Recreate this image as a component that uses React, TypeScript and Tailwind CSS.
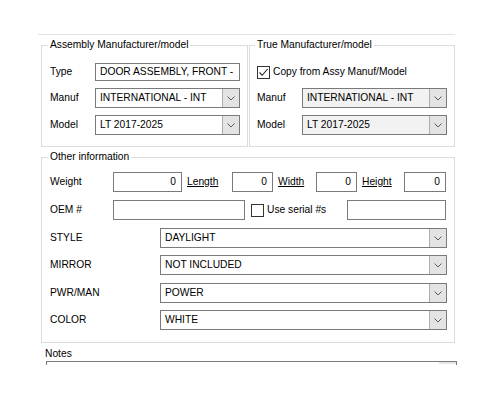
import React from "react"

function Chevron() {
  return (
    <svg width="8" height="5" viewBox="0 0 8 5" fill="none">
      <path d="M0.5 0.5 L4 4 L7.5 0.5" stroke="#5a5a5a" strokeWidth="1" />
    </svg>
  )
}

function Combo({ value, width, grey }: { value: string; width: string; grey?: boolean }) {
  return (
    <div className={`flex h-[20px] border border-[#7a7a7a] ${width} ${grey ? "bg-[#f2f2f2]" : "bg-white"}`}>
      <div className="flex-1 flex items-center pl-[4px] overflow-hidden whitespace-nowrap">{value}</div>
      <div className="w-[17px] flex items-center justify-center bg-[#e3e3e3] border-l border-[#adadad]">
        <Chevron />
      </div>
    </div>
  )
}

function Input({ value, width, right }: { value?: string; width: string; right?: boolean }) {
  return (
    <div
      className={`flex items-center h-[20px] border border-[#7a7a7a] bg-white ${width} ${
        right ? "justify-end pr-[5px]" : "pl-[4px]"
      }`}
    >
      {value}
    </div>
  )
}

function Checkbox({ checked }: { checked?: boolean }) {
  return (
    <div className="w-[13px] h-[13px] border border-[#333] bg-white flex items-center justify-center shrink-0">
      {checked && (
        <svg width="11" height="11" viewBox="0 0 11 11" fill="none">
          <path d="M1.5 5.5 L4.2 8.3 L9.6 2" stroke="#222" strokeWidth="1.1" />
        </svg>
      )}
    </div>
  )
}

const attrs = [
  { label: "STYLE", value: "DAYLIGHT", mt: "mt-[8px]" },
  { label: "MIRROR", value: "NOT INCLUDED", mt: "mt-[7px]" },
  { label: "PWR/MAN", value: "POWER", mt: "mt-[8px]" },
  { label: "COLOR", value: "WHITE", mt: "mt-[7px]" },
]

export default function App() {
  return (
    <div
      className="w-[500px] h-[400px] bg-white overflow-hidden pt-[34px] pl-[38px] text-[10.25px] leading-[12px] text-black"
      style={{ fontFamily: '"Liberation Sans", Arial, sans-serif' }}
    >
      {/* outer frame line */}
      <div className="w-[417px] border-t border-[#e3e3e3]" />

      {/* Manufacturer groups */}
      <div className="flex mt-[4px] ml-[3px]">
        <fieldset className="w-[207px] border border-[#dcdcdc] p-0 m-0">
          <legend className="ml-[6px] px-[2px] leading-[12px]">Assembly Manufacturer/model</legend>
          <div className="pt-[12px] pb-[11px] pl-[8px]">
            <div className="flex items-center h-[18px]">
              <span className="w-[45px]">Type</span>
              <div className="flex items-center h-[18px] w-[145px] border border-[#7a7a7a] pl-[4px] whitespace-nowrap overflow-hidden">
                DOOR ASSEMBLY, FRONT -
              </div>
            </div>
            <div className="flex items-center mt-[7px]">
              <span className="w-[45px]">Manuf</span>
              <Combo value="INTERNATIONAL - INT" width="w-[145px]" />
            </div>
            <div className="flex items-center mt-[7px]">
              <span className="w-[45px]">Model</span>
              <Combo value="LT 2017-2025" width="w-[145px]" />
            </div>
          </div>
        </fieldset>

        <fieldset className="w-[206px] ml-[1px] border border-[#dcdcdc] p-0 m-0">
          <legend className="ml-[5px] px-[2px] leading-[12px]">True Manufacturer/model</legend>
          <div className="pt-[12px] pb-[11px] pl-[7px]">
            <div className="flex items-center h-[18px] gap-[3px]">
              <Checkbox checked />
              <span>Copy from Assy Manuf/Model</span>
            </div>
            <div className="flex items-center mt-[7px]">
              <span className="w-[45px]">Manuf</span>
              <Combo value="INTERNATIONAL - INT" width="w-[145px]" grey />
            </div>
            <div className="flex items-center mt-[7px]">
              <span className="w-[45px]">Model</span>
              <Combo value="LT 2017-2025" width="w-[145px]" grey />
            </div>
          </div>
        </fieldset>
      </div>

      {/* Other information */}
      <fieldset className="w-[414px] mt-[4px] ml-[3px] border border-[#dcdcdc] p-0">
        <legend className="ml-[6px] px-[2px] leading-[12px]">Other information</legend>
        <div className="pt-[9px] pb-[12px] pl-[8px]">
          <div className="flex items-center">
            <span className="w-[63px]">Weight</span>
            <Input value="0" width="w-[69px]" right />
            <span className="w-[45px] ml-[5px] underline">Length</span>
            <Input value="0" width="w-[41px]" right />
            <span className="w-[38px] ml-[5px] underline">Width</span>
            <Input value="0" width="w-[41px]" right />
            <span className="w-[42px] ml-[5px] underline">Height</span>
            <Input value="0" width="w-[42px]" right />
          </div>
          <div className="flex items-center mt-[8px]">
            <span className="w-[63px]">OEM #</span>
            <Input width="w-[132px]" />
            <div className="ml-[6px]">
              <Checkbox />
            </div>
            <span className="w-[80px] ml-[3px]">Use serial #s</span>
            <Input width="w-[99px]" />
          </div>
          {attrs.map((a) => (
            <div key={a.label} className={`flex items-center ${a.mt}`}>
              <span className="w-[110px]">{a.label}</span>
              <Combo value={a.value} width="w-[287px]" />
            </div>
          ))}
        </div>
      </fieldset>

      {/* Notes */}
      <div className="mt-[5px] ml-[7px] leading-[12px]">Notes</div>
      <div className="relative mt-[1px] ml-[8px] w-[411px] h-[4px] border-t border-x border-[#7a7a7a]">
        <div className="absolute right-0 top-0 w-[17px] h-[2px] bg-[#e6e6e6]" />
      </div>
    </div>
  )
}
